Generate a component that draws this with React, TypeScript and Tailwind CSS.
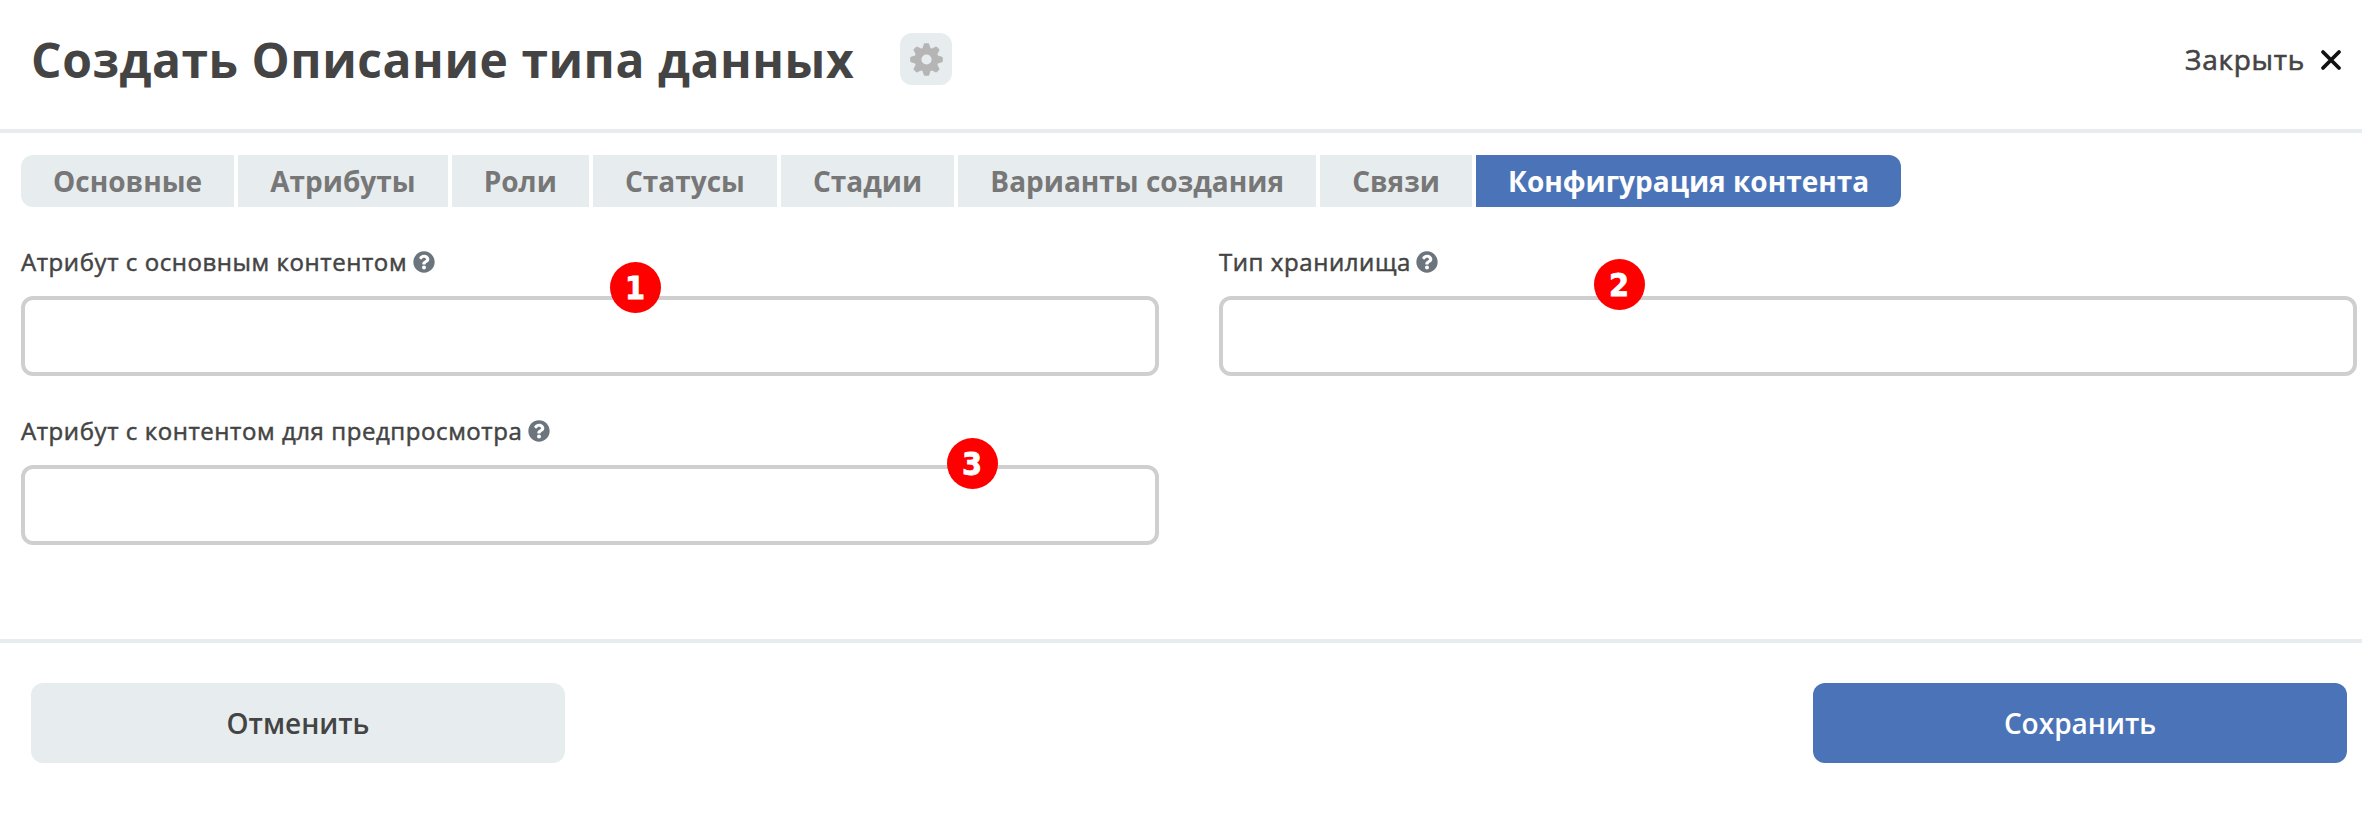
import { FaQuestionCircle } from "react-icons/fa";

const tabs = ["Основные", "Атрибуты", "Роли", "Статусы", "Стадии", "Варианты создания", "Связи", "Конфигурация контента"];

function GearIcon() {
  const teeth = [0, 45, 90, 135, 180, 225, 270, 315];
  return (
    <svg viewBox="-16.5 -16.5 33 33" className="size-[33px]" fill="#b5b5b5">
      <path fillRule="evenodd" d="M0-12A12 12 0 1 0 0 12A12 12 0 1 0 0-12ZM0-5.1A5.1 5.1 0 1 1 0 5.1A5.1 5.1 0 1 1 0-5.1Z" />
      {teeth.map((a) => (
        <path key={a} transform={`rotate(${a})`} d="M-4.2-10.6 L-2.7-15.4 Q-2.4-16.3-1.5-16.3 H1.5 Q2.4-16.3 2.7-15.4 L4.2-10.6Z" />
      ))}
    </svg>
  );
}

function Badge({ n, className }: { n: number; className: string }) {
  return (
    <span className={`absolute flex size-[51px] items-center justify-center rounded-full bg-[#ff0000] font-['DejaVu_Sans',sans-serif] text-[32px] leading-none font-bold text-white ${className}`}>
      <span className="scale-x-90 [-webkit-text-stroke:0.8px_#fff]">{n}</span>
    </span>
  );
}

function Field({ label, badge, badgeClass }: { label: string; badge: number; badgeClass: string }) {
  return (
    <div className="relative flex flex-col">
      <label className="flex h-9 items-center text-[24px] leading-9 tracking-[0.57px] whitespace-nowrap [-webkit-text-stroke:0.5px_#444]">
        {label}
        <FaQuestionCircle className="ml-[5.5px] size-[22px] text-[#6c757d]" stroke="none" />
      </label>
      <input className="mt-4 h-20 rounded-xl border-4 border-[#cfcfcf] bg-white px-6 text-[28px] outline-none" />
      <Badge n={badge} className={badgeClass} />
    </div>
  );
}

export default function App() {
  return (
    <div className="flex h-[817px] w-[2362px] flex-col overflow-hidden bg-white font-['Open_Sans','Noto_Sans',sans-serif] text-[#444]">
      <header className="flex h-[133px] items-start justify-between border-b-4 border-[#e7edef] pr-[20px] pl-[31px]">
        <div className="flex items-start">
          <h1 className="mt-[27px] w-[869px] text-[48px] leading-[65px] font-bold tracking-[0.54px] whitespace-nowrap">Создать Описание типа данных</h1>
          <button className="mt-[33px] flex size-[52px] items-center justify-center rounded-xl bg-[#e7edef]">
            <GearIcon />
          </button>
        </div>
        <button className="mt-[40px] flex items-center text-[28px] leading-[38px] tracking-[0.75px] [-webkit-text-stroke:0.6px_#444]">
          Закрыть
          <svg viewBox="0 0 22 22" className="mt-[2px] ml-[15px] size-[22px]" stroke="#111" strokeWidth="3.8" strokeLinecap="round">
            <path d="M3 3L19 19M19 3L3 19" />
          </svg>
        </button>
      </header>

      <nav className="mt-[22px] ml-[21px] flex h-[52px] gap-[4.15px]">
        {tabs.map((t, i) => (
          <button
            key={t}
            className={`px-8 text-[28px] leading-[52px] font-bold whitespace-nowrap first:rounded-l-xl last:rounded-r-xl ${
              i === tabs.length - 1 ? "bg-[#4b74b8] text-white" : "bg-[#e7edef] text-[#777]"
            }`}
          >
            {t}
          </button>
        ))}
      </nav>

      <main className="mt-[37px] ml-[21px] grid w-[2336px] grid-cols-2 gap-x-[60px] gap-y-[37px]">
        <Field label="Атрибут с основным контентом" badge={1} badgeClass="top-[18px] left-[589px]" />
        <Field label="Тип хранилища" badge={2} badgeClass="top-[15px] left-[375px]" />
        <Field label="Атрибут с контентом для предпросмотра" badge={3} badgeClass="top-[25px] left-[926px]" />
      </main>

      <footer className="mt-[94px] flex justify-between border-t-4 border-[#e7edef] pt-10 pr-[15px] pl-[31px] text-[28px] font-semibold">
        <button className="h-20 w-[534px] rounded-xl bg-[#e7edef]">Отменить</button>
        <button className="h-20 w-[534px] rounded-xl bg-[#4b74b8] text-white">Сохранить</button>
      </footer>
    </div>
  );
}
